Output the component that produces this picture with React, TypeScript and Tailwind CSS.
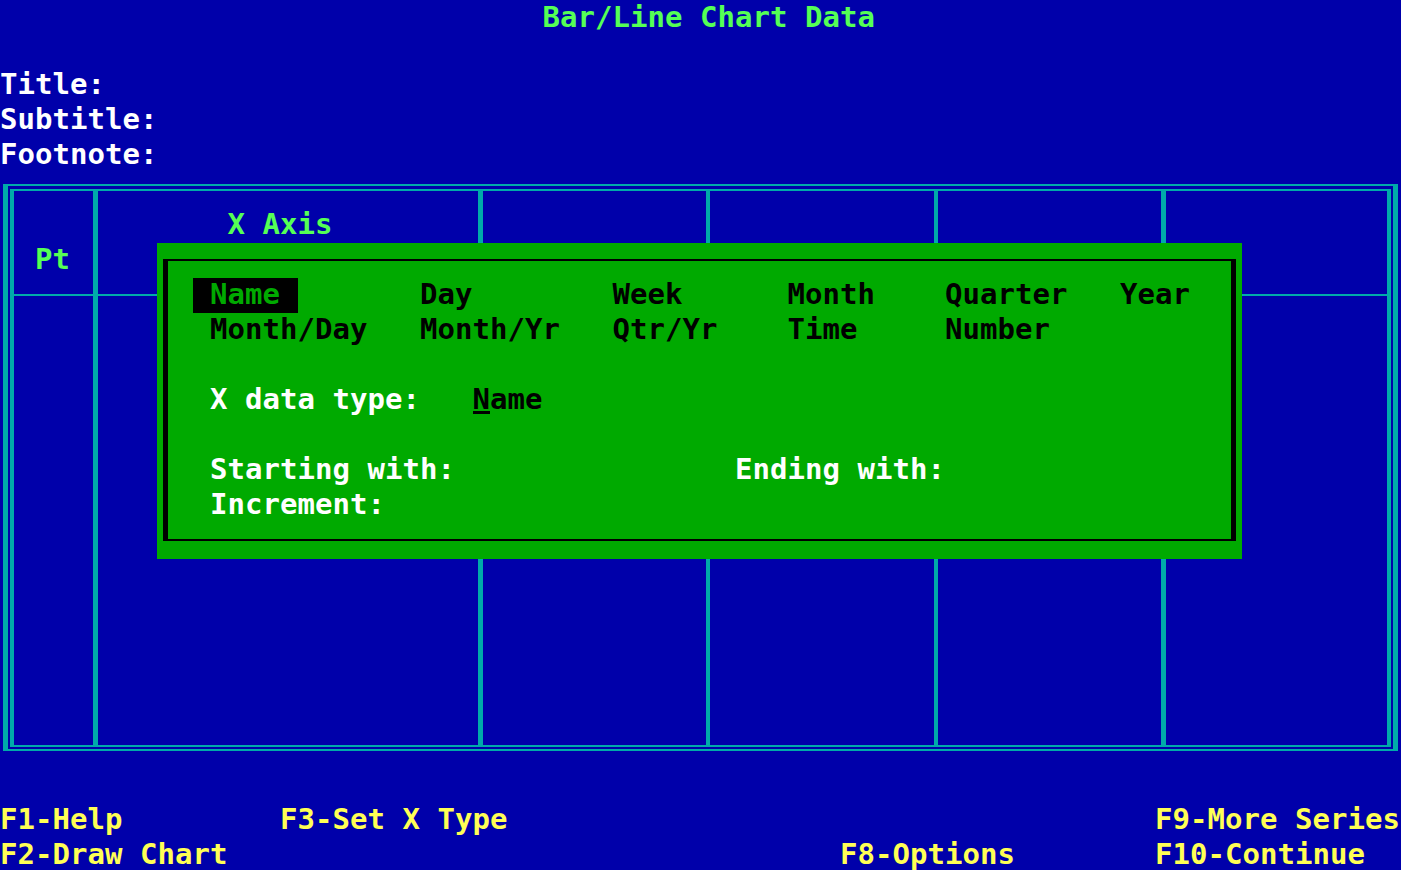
import type { ReactNode } from 'react';

// text-mode screen: 80 cols x 35px rows, 17.5px per char
const pad = (items: [number, string][], start = 0) => {
  let s = '';
  for (const [col, text] of items) s = s.padEnd(col - start) + text;
  return s;
};

function Row({ children, className = '' }: { children?: ReactNode; className?: string }) {
  return <div className={`h-[35px] leading-[33px] whitespace-pre ${className}`}>{children}</div>;
}

const widths = ['w-[79px]', 'w-[380px]', 'w-[223px]', 'w-[224px]', 'w-[223px]', 'flex-1'];
const dividers = ['w-[5px]', 'w-[5px]', 'w-[4px]', 'w-[4px]', 'w-[5px]'];

function GridRow({ className, cells }: { className: string; cells?: ReactNode[] }) {
  return (
    <div className={`flex ${className}`}>
      {widths.map((w, i) => (
        <div key={i} className="contents">
          <div className={`${w} h-full`}>{cells?.[i]}</div>
          {i < dividers.length && <div className={`${dividers[i]} h-full bg-[#00aaaa]`} />}
        </div>
      ))}
    </div>
  );
}

function XTypeDialog() {
  return (
    <div className="absolute left-[157px] top-[243px] h-[316px] w-[1085px] bg-[#00aa00] pb-[18px] pl-[6px] pr-[6px] pt-[16px]">
      <div className="h-full border-x-[5px] border-y-2 border-black pl-[24.5px] pt-[17px] text-black">
        <Row>
          <span className="inline-block h-[35px] bg-black align-top text-[#00aa00]"> Name </span>
          {pad([[24, 'Day'], [35, 'Week'], [45, 'Month'], [54, 'Quarter'], [64, 'Year']], 17)}
        </Row>
        <Row>{pad([[12, 'Month/Day'], [24, 'Month/Yr'], [35, 'Qtr/Yr'], [45, 'Time'], [54, 'Number']], 11)}</Row>
        <Row />
        <Row>
          <span className="text-white">{pad([[12, 'X data type:']], 11)}</span>
          {'   '}
          <span className="relative">
            N
            <span className="absolute left-0 top-[29px] h-[3px] w-[17px] bg-black" />
          </span>
          ame
        </Row>
        <Row />
        <Row className="text-white">{pad([[12, 'Starting with:'], [42, 'Ending with:']], 11)}</Row>
        <Row className="text-white">{pad([[12, 'Increment:']], 11)}</Row>
      </div>
    </div>
  );
}

export default function App() {
  return (
    <div className="relative h-[870px] w-[1401px] overflow-hidden bg-[#0000aa] font-['DejaVu_Sans_Mono',monospace] text-[29px] font-bold tracking-[0.04px] text-white">
      <div className="flex flex-col">
        <div className="h-[33px] whitespace-pre leading-[34px] text-[#55ff55]">{pad([[31, 'Bar/Line Chart Data']])}</div>
        <Row />
        <Row>Title:</Row>
        <Row>Subtitle:</Row>
        <Row>Footnote:</Row>

        <div className="mx-[3px] mt-[11px] h-[567px] border-x-[5px] border-y-2 border-[#00aaaa] px-[2px] pb-[2px] pt-[3px]">
          <div className="flex h-full flex-col border-x-4 border-y-2 border-[#00aaaa]">
            <GridRow
              className="h-[103px] text-[#55ff55]"
              cells={[
                <Row key="pt" className="h-auto pl-[21px] pt-[52px]">Pt</Row>,
                <Row key="x" className="h-auto pl-[129.5px] pt-[17px]">X Axis</Row>,
              ]}
            />
            <div className="h-[2px] bg-[#00aaaa]" />
            <GridRow className="flex-1" />
          </div>
        </div>

        <div className="mt-[52px] text-[#ffff55]">
          <Row>{pad([[0, 'F1-Help'], [16, 'F3-Set X Type'], [66, 'F9-More Series']])}</Row>
          <Row>{pad([[0, 'F2-Draw Chart'], [48, 'F8-Options'], [66, 'F10-Continue']])}</Row>
        </div>
      </div>

      <XTypeDialog />
    </div>
  );
}
